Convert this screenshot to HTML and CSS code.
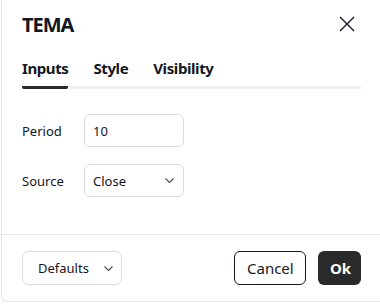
FILE: index.html
```html
<!DOCTYPE html>
<html lang="en">

<head>
  <meta charset="UTF-8">
  <meta name="viewport" content="width=device-width, initial-scale=1.0">
  <title>TEMA</title>
  <link rel="stylesheet" href="styles.css">
</head>

<body>

  <div class="dialog">
    <div class="dialog-header">
      <div class="dialog-title">TEMA</div>
      <button class="close-button">
        <svg width="16" height="16" viewBox="0 0 16 16">
          <path d="M1 1 L15 15 M15 1 L1 15" stroke="#131722" stroke-width="1.4" fill="none" />
        </svg>
      </button>
    </div>

    <div class="tabs">
      <div class="tab active">Inputs</div>
      <div class="tab">Style</div>
      <div class="tab">Visibility</div>
    </div>

    <div class="dialog-body">
      <div class="form-row">
        <label class="form-label">Period</label>
        <div class="field">10</div>
      </div>
      <div class="form-row">
        <label class="form-label">Source</label>
        <div class="field select">
          <span>Close</span>
          <svg width="9" height="5" viewBox="0 0 9 5">
            <path d="M0.5 0.5 L4.5 4.5 L8.5 0.5" stroke="#4a4e5a" stroke-width="1.1" fill="none" />
          </svg>
        </div>
      </div>
    </div>

    <div class="dialog-footer">
      <div class="defaults-button">
        <span>Defaults</span>
        <svg width="9" height="5" viewBox="0 0 9 5">
          <path d="M0.5 0.5 L4.5 4.5 L8.5 0.5" stroke="#4a4e5a" stroke-width="1.1" fill="none" />
        </svg>
      </div>
      <div class="footer-actions">
        <button class="btn btn-outline">Cancel</button>
        <button class="btn btn-dark">Ok</button>
      </div>
    </div>
  </div>

</body>

</html>
```

FILE: styles.css
```css
body {
  margin: 0;
  background-color: #fff;
  font-family: "Noto Sans", "DejaVu Sans", sans-serif;
  color: #131722;
}

.dialog {
  margin-left: 1px;
  width: 379px;
  height: 302px;
  border-left: 1px solid #e6e6e6;
  border-bottom: 1px solid #e6e6e6;
  border-bottom-left-radius: 6px;
  box-sizing: border-box;
  display: flex;
  flex-direction: column;
}

.dialog-header {
  display: flex;
  align-items: center;
  justify-content: space-between;
  padding: 10px 25px 0 20px;
  height: 28px;
}

.dialog-title {
  font-size: 20px;
  font-weight: bold;
  letter-spacing: -1px;
}

.close-button {
  background: none;
  border: none;
  padding: 0;
  width: 16px;
  height: 16px;
  display: flex;
  align-items: center;
  justify-content: center;
  cursor: pointer;
}

.tabs {
  display: flex;
  gap: 25px;
  margin: 20px 19px 0 20px;
  border-bottom: 3px solid #f0f0f0;
}

.tab {
  font-size: 15px;
  font-weight: bold;
  padding-bottom: 8px;
  margin-bottom: -3px;
  border-bottom: 3px solid transparent;
  letter-spacing: -0.4px;
}

.tab.active {
  border-bottom-color: #2a2a2a;
  border-bottom-left-radius: 2px;
  border-bottom-right-radius: 2px;
}

.dialog-body {
  flex: 1;
  padding: 25px 20px 0 20px;
  display: flex;
  flex-direction: column;
  gap: 17px;
  border-bottom: 1px solid #e6e6e6;
}

.form-row {
  display: flex;
  align-items: center;
}

.form-label {
  width: 62px;
  font-size: 13px;
}

.field {
  width: 100px;
  height: 33px;
  box-sizing: border-box;
  border: 1px solid #dcdcdc;
  border-radius: 6px;
  padding: 0 8px;
  font-size: 13px;
  display: flex;
  align-items: center;
}

.select {
  justify-content: space-between;
  padding-right: 9px;
}

.dialog-footer {
  display: flex;
  align-items: center;
  justify-content: space-between;
  padding: 16px 19px 16px 20px;
}

.defaults-button {
  width: 100px;
  height: 34px;
  box-sizing: border-box;
  border: 1px solid #dcdcdc;
  border-radius: 6px;
  display: flex;
  align-items: center;
  justify-content: space-between;
  padding: 0 8px 0 15px;
  font-size: 13px;
}

.footer-actions {
  display: flex;
  gap: 12px;
}

.btn {
  height: 34px;
  border-radius: 6px;
  font-family: inherit;
  font-size: 15px;
  padding: 0 12px;
  cursor: pointer;
}

.btn-outline {
  background: #fff;
  border: 1px solid #131722;
  color: #131722;
  width: 72px;
}

.btn-dark {
  background: #2a2a2a;
  border: none;
  color: #fff;
  font-weight: bold;
  width: 43px;
}
```
